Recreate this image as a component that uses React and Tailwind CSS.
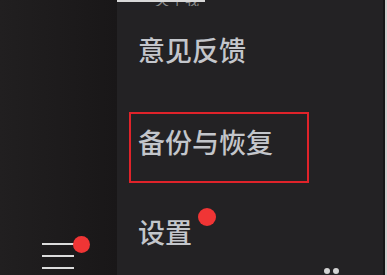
export default function App() {
  const font = { fontFamily: '"Noto Sans CJK SC", "Noto Sans", sans-serif' };
  return (
    <div className="w-[387px] h-[275px] overflow-hidden flex bg-[#1e1c1d]" style={font}>
      {/* left sidebar */}
      <div className="w-[117px] h-full bg-gradient-to-r from-[#211f20] via-[#1d1b1c] to-[#191718] flex flex-col justify-end">
        <div className="relative ml-[42px] mb-[6px] w-[32px] flex flex-col gap-[10px]">
          <div className="h-[2px] bg-[#dcdcdc]" />
          <div className="h-[2px] bg-[#dcdcdc]" />
          <div className="h-[2px] bg-[#dcdcdc]" />
          <div className="absolute left-[31px] top-[-7px] w-[17px] h-[17px] rounded-full bg-[#f03535]" />
        </div>
      </div>
      {/* menu panel */}
      <div className="relative flex-1 h-full bg-[#232224] flex flex-col">
        <div className="flex h-[6px] items-start">
          <div className="w-[38px] h-[2px] bg-[#d8d8d8]" />
          <div className="w-[50px] h-[6px] overflow-hidden border-t-2 border-[#d8d8d8]">
            <div className="text-[14px] leading-none text-[#8a8a8a] mt-[-10px] tracking-[1px]">关于我们</div>
          </div>
        </div>
        <div className="mt-[30px] ml-[21px] text-[27px] leading-none font-medium text-[#c3c6cb]">意见反馈</div>
        <div className="mt-[49px] ml-[12px] w-[180px] h-[71px] border-2 border-[#e0232a] pl-[7px] pt-[14px]">
          <div className="text-[27px] leading-none font-medium text-[#c3c6cb]">备份与恢复</div>
        </div>
        <div className="mt-[35px] ml-[21px] relative w-fit">
          <div className="text-[27px] leading-none font-medium text-[#c3c6cb]">设置</div>
          <div className="absolute left-[60px] top-[-10px] w-[18px] h-[18px] rounded-full bg-[#f03535]" />
        </div>
        <div className="absolute left-[207px] top-[268px] flex gap-[3px]">
          <div className="w-[6px] h-[6px] rounded-full bg-[#d4d4d4]" />
          <div className="w-[6px] h-[6px] rounded-full bg-[#d4d4d4]" />
        </div>
      </div>
      <div className="w-[2px] h-full bg-[#161616]" />
      <div className="w-[2px] h-full bg-[#cfcfcf]" />
    </div>
  );
}
